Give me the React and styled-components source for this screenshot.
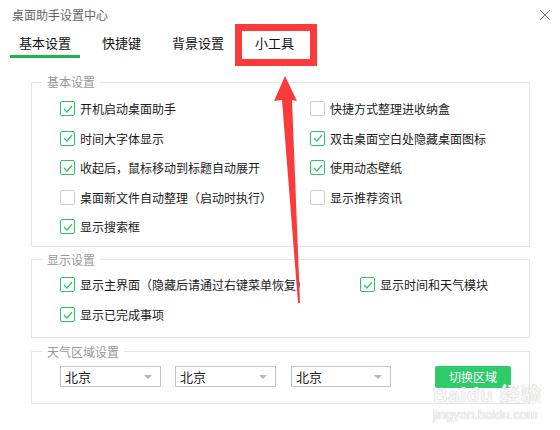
import React from "react";
import styled, { createGlobalStyle } from "styled-components";

const GlobalStyle = createGlobalStyle`
  html, body {
    margin: 0;
    padding: 0;
    background: #ffffff;
  }
  body {
    font-family: "Noto Sans CJK SC", "Noto Sans", sans-serif;
    color: #222;
  }
`;

const Window = styled.div`
  position: relative;
  width: 560px;
  height: 430px;
  background: #fff;
  overflow: hidden;
`;

const TitleBar = styled.div`
  display: flex;
  justify-content: space-between;
  align-items: center;
  padding: 7px 9px 0 12px;
  height: 16px;
`;

const Title = styled.div`
  font-size: 12px;
  line-height: 16px;
  color: #666;
`;

const CloseBtn = styled.div`
  width: 12px;
  height: 12px;
  display: flex;
`;

const Tabs = styled.div`
  display: flex;
  gap: 13px;
  margin: 11px 0 0 10px;
`;

const Tab = styled.div`
  padding: 0 9px 3px 9px;
  font-size: 13px;
  line-height: 18px;
  color: #111;
  border-bottom: 3px solid ${(p) => (p.$active ? "#1db550" : "transparent")};
`;

const Group = styled.fieldset`
  margin: ${(p) => p.$mt}px 30px 0 31px;
  padding: ${(p) => p.$pt}px 0 ${(p) => p.$pb}px 28px;
  border: 1px solid #e6e6e6;
  min-width: 0;
`;

const Legend = styled.legend`
  margin-left: -18px;
  padding: 0 5px;
  font-size: 12px;
  line-height: 16px;
  color: #999;
`;

const Grid = styled.div`
  display: grid;
  grid-template-columns: ${(p) => p.$col}px 1fr;
  grid-auto-rows: ${(p) => p.$row}px;
`;

const Item = styled.label`
  display: flex;
  align-items: center;
  gap: 5px;
  font-size: 12px;
  color: #1a1a1a;
  white-space: nowrap;
`;

const Box = styled.span`
  width: 13px;
  height: 13px;
  border: 1px solid ${(p) => (p.$on ? "#2cc464" : "#cfcfcf")};
  border-radius: 2px;
  display: flex;
  align-items: center;
  justify-content: center;
  background: #fff;
  flex-shrink: 0;
`;

const SelectRow = styled.div`
  display: flex;
  align-items: center;
`;

const Select = styled.div`
  height: 21px;
  border: 1px solid #c4c4c4;
  margin-right: ${(p) => p.$mr}px;
  display: flex;
  align-items: center;
  justify-content: space-between;
  padding: 0 8px 0 4px;
  box-sizing: border-box;
  width: ${(p) => p.$w}px;
  font-size: 13px;
  color: #222;
`;

const Caret = styled.span`
  width: 0;
  height: 0;
  border-left: 4px solid transparent;
  border-right: 4px solid transparent;
  border-top: 4px solid #b8b8b8;
`;

const SwitchBtn = styled.button`
  width: 76px;
  height: 22px;
  border: none;
  border-radius: 2px;
  background: #2ecb6b;
  color: #fff;
  font-family: inherit;
  font-size: 12px;
  padding: 0;
`;

const RedBox = styled.div`
  position: absolute;
  left: 235px;
  top: 24px;
  width: 82px;
  height: 42px;
  box-sizing: border-box;
  border: 7px solid #fb3b3b;
  pointer-events: none;
`;

const Overlay = styled.svg`
  position: absolute;
  left: 0;
  top: 0;
  pointer-events: none;
`;

const Watermark = styled.div`
  position: absolute;
  left: 433px;
  top: 385px;
  display: flex;
  flex-direction: column;
  align-items: flex-start;
  pointer-events: none;
  color: rgba(255, 255, 255, 0.85);
  font-family: "Liberation Sans", "Noto Sans CJK SC", sans-serif;
  text-shadow: 0 0 1px #c8c8c8, 0 0 1px #c8c8c8;
`;

const WmTop = styled.div`
  font-size: 20px;
  font-weight: bold;
  line-height: 20px;
  letter-spacing: 1px;
`;

const WmUrl = styled.div`
  font-size: 13px;
  line-height: 16px;
  margin-top: 2px;
`;

const Check = ({ on }) => (
  <Box $on={on}>
    {on && (
      <svg width="10" height="8" viewBox="0 0 10 8">
        <path d="M1 4 L4 7 L9 1" fill="none" stroke="#2cc464" strokeWidth="1.2" />
      </svg>
    )}
  </Box>
);

const basic = [
  ["开机启动桌面助手", true],
  ["快捷方式整理进收纳盒", false],
  ["时间大字体显示", true],
  ["双击桌面空白处隐藏桌面图标", true],
  ["收起后，鼠标移动到标题自动展开", true],
  ["使用动态壁纸", true],
  ["桌面新文件自动整理（启动时执行）", false],
  ["显示推荐资讯", false],
  ["显示搜索框", true],
];

const display = [
  ["显示主界面（隐藏后请通过右键菜单恢复）", true],
  ["显示时间和天气模块", true],
  ["显示已完成事项", true],
];

export default function App() {
  return (
    <Window>
      <GlobalStyle />
      <TitleBar>
        <Title>桌面助手设置中心</Title>
        <CloseBtn>
          <svg width="12" height="12" viewBox="0 0 12 12">
            <path d="M1 1 L11 11 M11 1 L1 11" stroke="#777" strokeWidth="1" />
          </svg>
        </CloseBtn>
      </TitleBar>

      <Tabs>
        <Tab $active>基本设置</Tab>
        <Tab>快捷键</Tab>
        <Tab>背景设置</Tab>
        <Tab>小工具</Tab>
      </Tabs>

      <Group $mt={16} $pt={4} $pb={4}>
        <Legend>基本设置</Legend>
        <Grid $col={250} $row={29.5}>
          {basic.map(([t, on]) => (
            <Item key={t}>
              <Check on={on} />
              {t}
            </Item>
          ))}
        </Grid>
      </Group>

      <Group $mt={5} $pt={2} $pb={7}>
        <Legend>显示设置</Legend>
        <Grid $col={300} $row={30}>
          {display.map(([t, on]) => (
            <Item key={t}>
              <Check on={on} />
              {t}
            </Item>
          ))}
        </Grid>
      </Group>

      <Group $mt={6} $pt={6} $pb={15}>
        <Legend>天气区域设置</Legend>
        <SelectRow>
          <Select $w={101} $mr={14}>
            北京
            <Caret />
          </Select>
          <Select $w={101} $mr={15}>
            北京
            <Caret />
          </Select>
          <Select $w={100} $mr={44}>
            北京
            <Caret />
          </Select>
          <SwitchBtn>切换区域</SwitchBtn>
        </SelectRow>
      </Group>

      <RedBox />
      <Overlay width="560" height="430" viewBox="0 0 560 430">
        <polygon
          points="285,76 297,101 292,100 300,303 298,303 282,100 274,101"
          fill="#fb3b3b"
        />
      </Overlay>

      <Watermark>
        <WmTop>Baidu 经验</WmTop>
        <WmUrl>jingyan.baidu.com</WmUrl>
      </Watermark>
    </Window>
  );
}
